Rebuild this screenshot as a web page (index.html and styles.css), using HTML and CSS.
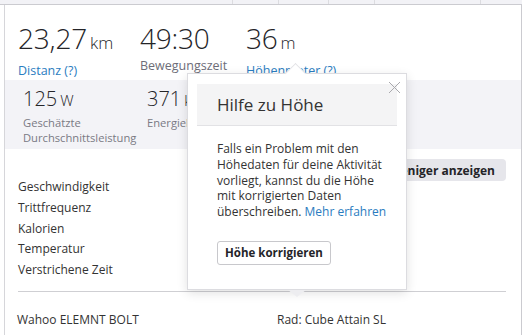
FILE: index.html
```html
<!DOCTYPE html>
<html lang="de">
<head>
<meta charset="utf-8">
<link rel="stylesheet" href="styles.css">
</head>
<body>
<div class="topbar">
  <div class="tb c1"></div><div class="tb c2"></div><div class="tb c3"></div><div class="tb c4"></div><div class="tb c5"></div><div class="tb c6"></div>
</div>
<div class="card">
  <div class="stats">
    <div class="stat s1"><div class="big">23,27<span class="unit">km</span></div><div class="label link">Distanz (?)</div></div>
    <div class="stat s2"><div class="big">49:30</div><div class="label">Bewegungszeit</div></div>
    <div class="stat s3"><div class="big">36<span class="unit">m</span></div><div class="label link">Höhenmeter (?)</div></div>
  </div>
  <div class="secondary">
    <div class="sec s1"><div class="mid">125<span class="unit2">W</span></div><div class="label2">Geschätzte<br>Durchschnittsleistung</div></div>
    <div class="sec s2"><div class="mid">371<span class="unit2">kJ</span></div><div class="label2">Energieleistung</div></div>
  </div>
  <div class="details">
    <ul class="list">
      <li>Geschwindigkeit</li>
      <li>Trittfrequenz</li>
      <li>Kalorien</li>
      <li>Temperatur</li>
      <li>Verstrichene Zeit</li>
    </ul>
    <button class="less">Weniger anzeigen</button>
  </div>
  <div class="divider"></div>
  <div class="footer">
    <div class="device">Wahoo ELEMNT BOLT</div>
    <div class="bike">Rad: Cube Attain SL</div>
  </div>
</div>

<div class="popup">
  <div class="arrow-top"></div>
  <svg class="close" width="13" height="13" viewBox="0 0 13 13"><path d="M1 1 L12 12 M12 1 L1 12" stroke="#a9a9ad" stroke-width="1" fill="none"/></svg>
  <div class="pop-head">Hilfe zu Höhe</div>
  <div class="pop-body">
    <p class="pop-text">Falls ein Problem mit den<br>Höhedaten für deine Aktivität<br>vorliegt, kannst du die Höhe<br>mit korrigierten Daten<br>überschreiben. <a class="more">Mehr erfahren</a></p>
    <button class="fix">Höhe korrigieren</button>
  </div>
  <div class="arrow-bottom"></div>
</div>
</body>
</html>
```
FILE: styles.css
```css
html, body {
  margin: 0;
  padding: 0;
}
body {
  width: 527px;
  height: 335px;
  overflow: hidden;
  position: relative;
  background: #fff;
  font-family: "Open Sans", "Noto Sans", sans-serif;
  color: #333;
}
.topbar {
  display: flex;
  height: 4px;
  width: 522px;
  background: #f2f2f6;
  border-bottom: 1px solid #cbcbd0;
}
.tb { border-right: 1px solid #dcdce0; }
.c1 { width: 232px; }
.c2 { width: 45px; }
.c3 { width: 49px; }
.c4 { width: 45px; }
.c5 { width: 105px; }
.c6 { flex: 1; border-right: none; }

.card {
  margin-left: 4px;
  width: 516px;
  height: 330px;
  border-left: 1px solid #d6d6da;
  border-right: 1px solid #cbcbd0;
}
.stats {
  display: flex;
  padding: 14px 0 0 13px;
  height: 61px;
}
.stat.s1 { width: 122px; }
.stat.s2 { width: 106px; }
.big {
  font-size: 28px;
  line-height: 38px;
  font-weight: 300;
  color: #242428;
  letter-spacing: -0.2px;
}
.unit {
  font-size: 17px;
  margin-left: 3px;
  letter-spacing: 0;
}
.label {
  font-size: 12.5px;
  line-height: 17px;
  color: #6d6d78;
}
.label.link { color: #2a7cc0; }

.secondary {
  display: flex;
  background: #f3f3f7;
  padding: 5px 0 4px 18px;
}
.sec.s1 { width: 124px; }
.mid {
  font-size: 20px;
  line-height: 27.5px;
  font-weight: 300;
  color: #242428;
}
.unit2 {
  font-size: 15px;
  margin-left: 3px;
}
.label2 {
  font-size: 11.2px;
  line-height: 15.3px;
  color: #7a7a84;
}

.details {
  display: flex;
  justify-content: space-between;
  align-items: flex-start;
  padding: 0 15px 0 13px;
}
.list {
  list-style: none;
  margin: 28px 0 0 0;
  padding: 0;
}
.list li {
  font-size: 12px;
  line-height: 20.8px;
  color: #333;
}
.less {
  margin-top: 10px;
  height: 22px;
  padding: 0 11px;
  border: none;
  border-radius: 4px;
  background: #e6e6eb;
  font-family: inherit;
  font-size: 12px;
  font-weight: 700;
  color: #242428;
}
.divider {
  margin: 10px 15px 0 13px;
  border-top: 1px solid #cfcfd3;
}
.footer {
  display: flex;
  padding: 20px 0 0 12px;
  font-size: 12px;
  line-height: 16px;
  color: #333;
}
.device { width: 260px; }

.popup {
  position: absolute;
  left: 187px;
  top: 73px;
  width: 218px;
  height: 215px;
  background: #fff;
  border: 1px solid #dcdce0;
  box-shadow: 0 3px 10px rgba(0, 0, 0, 0.12);
}
.arrow-top {
  position: absolute;
  left: 100px;
  top: -8px;
  width: 14px;
  height: 14px;
  background: #fff;
  border-top: 1px solid #e2e2e6;
  border-left: 1px solid #e2e2e6;
  transform: rotate(45deg);
}
.arrow-bottom {
  position: absolute;
  left: 100px;
  bottom: -8px;
  width: 0;
  height: 0;
  border-left: 9px solid transparent;
  border-right: 9px solid transparent;
  border-top: 7px solid #ededf0;
}
.close {
  position: absolute;
  left: 200px;
  top: 7px;
}
.pop-head {
  margin: 10px 9px 0 9px;
  height: 41px;
  display: flex;
  align-items: center;
  padding-left: 20px;
  background: #f4f4f5;
  border-bottom: 1px solid #e2e2e5;
  font-size: 17px;
  font-weight: 400;
  color: #333;
}
.pop-body {
  padding: 15px 0 0 29px;
}
.pop-text {
  margin: 0;
  font-size: 12px;
  line-height: 15.8px;
  color: #333;
}
.more { color: #2a7cc0; }
.fix {
  margin-top: 21px;
  height: 24px;
  padding: 0 7px;
  background: #fff;
  border: 1px solid #c8c8cc;
  border-radius: 3px;
  font-family: inherit;
  font-size: 11.5px;
  font-weight: 700;
  color: #242428;
}
```
